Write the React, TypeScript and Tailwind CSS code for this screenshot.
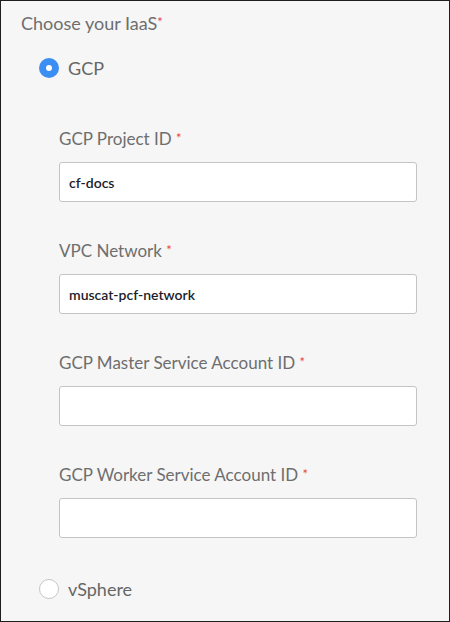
import { useState } from 'react';

type Field = { id: string; label: string; value: string };

const FIELDS: Field[] = [
  { id: 'gcp-project', label: 'GCP Project ID', value: 'cf-docs' },
  { id: 'vpc-network', label: 'VPC Network', value: 'muscat-pcf-network' },
  { id: 'master-sa', label: 'GCP Master Service Account ID', value: '' },
  { id: 'worker-sa', label: 'GCP Worker Service Account ID', value: '' },
];

function Req() {
  return <span className="text-[#e8453c] text-[13px] align-top relative top-[-1px]">*</span>;
}

function Radio({ checked, label, onClick }: { checked: boolean; label: string; onClick: () => void }) {
  return (
    <button className="flex items-center h-5 gap-[9px] text-left" onClick={onClick}>
      {checked ? (
        <span className="w-5 h-5 rounded-full bg-[#3c8ef3] flex items-center justify-center">
          <span className="w-[6px] h-[6px] rounded-full bg-white" />
        </span>
      ) : (
        <span className="w-5 h-5 rounded-full bg-white border-[1.5px] border-[#c6c6c6]" />
      )}
      <span className="text-[18px] leading-[22px] text-[#666666]">{label}</span>
    </button>
  );
}

export default function App() {
  const [iaas, setIaas] = useState<'gcp' | 'vsphere'>('gcp');
  const [values, setValues] = useState<Record<string, string>>(
    Object.fromEntries(FIELDS.map(f => [f.id, f.value]))
  );

  return (
    <div className="w-[450px] h-[622px] border border-[#1e1e1e] bg-[#f6f6f6] font-['Lato',sans-serif] pt-[11px] overflow-hidden">
      <div className="pl-5 text-[18px] leading-[22px] text-[#6e6e6e]">
        Choose your IaaS<Req />
      </div>

      <div className="pl-[38px] mt-[24px]">
        <Radio checked={iaas === 'gcp'} label="GCP" onClick={() => setIaas('gcp')} />
      </div>

      <div className="pl-[58px] pr-[32px] mt-[50px] flex flex-col gap-[38px]">
        {FIELDS.map(f => (
          <div key={f.id}>
            <label htmlFor={f.id} className="block text-[17px] leading-[22px] text-[#6e6e6e] mb-3">
              {f.label} <Req />
            </label>
            <input
              id={f.id}
              className="block w-full h-10 bg-white border border-[#c4c4c4] rounded-[3px] px-[9px] text-[14px] font-semibold text-[#1c1c2a] outline-none"
              value={values[f.id]}
              onChange={e => setValues({ ...values, [f.id]: e.target.value })}
            />
          </div>
        ))}
      </div>

      <div className="pl-[38px] mt-[41px]">
        <Radio checked={iaas === 'vsphere'} label="vSphere" onClick={() => setIaas('vsphere')} />
      </div>
    </div>
  );
}
